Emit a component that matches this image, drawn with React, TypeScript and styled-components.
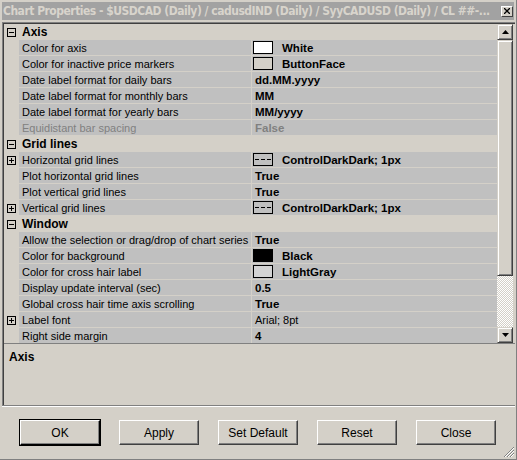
import React from 'react';
import styled, { createGlobalStyle, css } from 'styled-components';

type Row =
  | { kind: 'cat'; label: string }
  | {
      kind: 'prop';
      label: string;
      value: string;
      swatch?: string;
      line?: boolean;
      plain?: boolean;
      disabled?: boolean;
      expandable?: boolean;
    };

const rows: Row[] = [
  { kind: 'cat', label: 'Axis' },
  { kind: 'prop', label: 'Color for axis', value: 'White', swatch: '#ffffff' },
  { kind: 'prop', label: 'Color for inactive price markers', value: 'ButtonFace', swatch: '#d4d0c8' },
  { kind: 'prop', label: 'Date label format for daily bars', value: 'dd.MM.yyyy' },
  { kind: 'prop', label: 'Date label format for monthly bars', value: 'MM' },
  { kind: 'prop', label: 'Date label format for yearly bars', value: 'MM/yyyy' },
  { kind: 'prop', label: 'Equidistant bar spacing', value: 'False', disabled: true },
  { kind: 'cat', label: 'Grid lines' },
  { kind: 'prop', label: 'Horizontal grid lines', value: 'ControlDarkDark; 1px', line: true, expandable: true },
  { kind: 'prop', label: 'Plot horizontal grid lines', value: 'True' },
  { kind: 'prop', label: 'Plot vertical grid lines', value: 'True' },
  { kind: 'prop', label: 'Vertical grid lines', value: 'ControlDarkDark; 1px', line: true, expandable: true },
  { kind: 'cat', label: 'Window' },
  { kind: 'prop', label: 'Allow the selection or drag/drop of chart series', value: 'True' },
  { kind: 'prop', label: 'Color for background', value: 'Black', swatch: '#000000' },
  { kind: 'prop', label: 'Color for cross hair label', value: 'LightGray', swatch: '#d3d3d3' },
  { kind: 'prop', label: 'Display update interval (sec)', value: '0.5' },
  { kind: 'prop', label: 'Global cross hair time axis scrolling', value: 'True' },
  { kind: 'prop', label: 'Label font', value: 'Arial; 8pt', plain: true, expandable: true },
  { kind: 'prop', label: 'Right side margin', value: '4' },
];

const buttons = ['OK', 'Apply', 'Set Default', 'Reset', 'Close'];

const GlobalStyle = createGlobalStyle`
  body {
    margin: 0;
    font-family: "Liberation Sans", Arial, sans-serif;
    font-size: 11px;
  }
`;

const Window = styled.div`
  position: relative;
  box-sizing: border-box;
  width: 517px;
  height: 460px;
  background: #d4d0c8;
  padding: 2px 2px 0 2px;
  border-right: 1px solid #808080;
  border-bottom: 1px solid #808080;
  display: flex;
  flex-direction: column;
  overflow: hidden;
`;

const TitleBar = styled.div`
  height: 18px;
  background: #a2a2a2;
  display: flex;
  align-items: center;
  padding-left: 1px;
`;

const Title = styled.div`
  flex: 1;
  min-width: 0;
  color: #d8d4cc;
  font-family: "DejaVu Sans Condensed", "DejaVu Sans", sans-serif;
  font-stretch: condensed;
  font-weight: bold;
  font-size: 12px;
  letter-spacing: -0.5px;
  white-space: nowrap;
  overflow: hidden;
`;

const CloseButton = styled.div`
  width: 10px;
  height: 9px;
  flex: none;
  margin: 0 1px 0 4px;
  background: #d4d0c8;
  border-top: 1px solid #fff;
  border-left: 1px solid #fff;
  border-right: 1px solid #404040;
  border-bottom: 1px solid #404040;
  display: flex;
  align-items: center;
  justify-content: center;
`;

const Frame = styled.div`
  margin-top: 2px;
  width: 511px;
  border-top: 1px solid #808080;
  border-left: 1px solid #808080;
  border-bottom: 1px solid #808080;
  box-shadow: inset 1px 1px 0 #404040, 0 1px 0 #ffffff;
  padding: 1px 0 0 1px;
  display: flex;
  flex-direction: column;
`;

const GridArea = styled.div`
  height: 319px;
  display: flex;
  border-bottom: 1px solid #808080;
  overflow: hidden;
`;

const Grid = styled.div`
  width: 493px;
  display: flex;
  flex-direction: column;
`;

const RowBox = styled.div`
  flex: none;
  height: 16px;
  display: flex;
`;

const Gutter = styled.div`
  width: 15px;
  flex: none;
  background: #d4d0c8;
  display: flex;
  align-items: center;
  padding-left: 3px;
  box-sizing: border-box;
`;

const Cell = styled.div<{ $grow?: boolean }>`
  box-sizing: border-box;
  background: #c0c0c0;
  border-bottom: 1px solid #d4d0c8;
  display: flex;
  align-items: center;
  white-space: nowrap;
  overflow: hidden;
  ${({ $grow }) =>
    $grow
      ? css`
          flex: 1;
          border-left: 1px solid #d4d0c8;
        `
      : css`
          width: 232px;
          flex: none;
          padding-left: 3px;
        `}
`;

const NameText = styled.span<{ $disabled?: boolean }>`
  color: ${({ $disabled }) => ($disabled ? '#808080' : '#000')};
`;

const ValueText = styled.span<{ $bold: boolean; $disabled?: boolean; $indent: number }>`
  padding-left: ${({ $indent }) => $indent}px;
  font-weight: ${({ $bold }) => ($bold ? 'bold' : 'normal')};
  font-size: ${({ $bold }) => ($bold ? '11.5px' : '11px')};
  color: ${({ $disabled }) => ($disabled ? '#808080' : '#000')};
`;

const Category = styled.div`
  flex: 1;
  background: #d4d0c8;
  display: flex;
  align-items: center;
  padding-left: 3px;
  font-weight: bold;
  font-size: 12px;
`;

const Swatch = styled.div<{ $color: string }>`
  width: 20px;
  height: 13px;
  box-sizing: border-box;
  margin-left: 1px;
  border: 1px solid #000;
  background: ${({ $color }) => $color};
  flex: none;
`;

const ScrollBar = styled.div`
  width: 16px;
  flex: none;
  display: flex;
  flex-direction: column;
  background-color: #d4d0c8;
  background-image: conic-gradient(#ffffff 25%, #d4d0c8 0 50%, #ffffff 0 75%, #d4d0c8 0);
  background-size: 2px 2px;
`;

const raised = css`
  box-sizing: border-box;
  background: #d4d0c8;
  border-top: 1px solid #d4d0c8;
  border-left: 1px solid #d4d0c8;
  border-right: 1px solid #404040;
  border-bottom: 1px solid #404040;
  box-shadow: inset 1px 1px 0 #ffffff, inset -1px -1px 0 #808080;
`;

const ArrowButton = styled.div`
  ${raised};
  height: 16px;
  flex: none;
  display: flex;
  align-items: center;
  justify-content: center;
`;

const Thumb = styled.div`
  ${raised};
  height: 236px;
  flex: none;
`;

const Track = styled.div`
  flex: 1;
`;

const Description = styled.div`
  height: 61px;
  border-top: 1px solid #d4d0c8;
  padding: 5px 5px;
  box-sizing: border-box;
  font-weight: bold;
  font-size: 12px;
`;

const ButtonRow = styled.div`
  display: flex;
  gap: 19px;
  padding: 14px 0 0 18px;
`;

const Button = styled.div<{ $default?: boolean }>`
  width: 80px;
  height: 25px;
  box-sizing: border-box;
  display: flex;
  align-items: center;
  justify-content: center;
  font-size: 12px;
  background: #d4d0c8;
  border-top: 1px solid #ffffff;
  border-left: 1px solid #ffffff;
  border-right: 1px solid #404040;
  border-bottom: 1px solid #404040;
  box-shadow: inset -1px -1px 0 #808080;
  ${({ $default }) =>
    $default &&
    css`
      outline: 1px solid #000;
      outline-offset: 0;
      border-right-color: #000;
      border-bottom-color: #000;
    `}
`;

const Grip = styled.svg`
  position: absolute;
  right: 1px;
  bottom: 1px;
`;

const Expander = ({ open }: { open: boolean }) => (
  <svg width="9" height="9" viewBox="0 0 9 9">
    <rect x="0.5" y="0.5" width="8" height="8" fill="#d4d0c8" stroke="#000" />
    <line x1="2" y1="4.5" x2="7" y2="4.5" stroke="#000" />
    {!open && <line x1="4.5" y1="2" x2="4.5" y2="7" stroke="#000" />}
  </svg>
);

const LineIcon = () => (
  <svg width="20" height="13" viewBox="0 0 20 13" style={{ marginLeft: 1, flex: 'none' }}>
    <rect x="0.5" y="0.5" width="19" height="12" fill="none" stroke="#000" />
    <line x1="2" y1="6.5" x2="18" y2="6.5" stroke="#000" strokeDasharray="4 2" />
  </svg>
);

const Arrow = ({ up }: { up: boolean }) => (
  <svg width="7" height="4" viewBox="0 0 7 4">
    <polygon points={up ? '3.5,0 7,4 0,4' : '0,0 7,0 3.5,4'} fill="#000" />
  </svg>
);

const PropertyRow = ({ row }: { row: Row }) => {
  if (row.kind === 'cat') {
    return (
      <RowBox>
        <Gutter>
          <Expander open />
        </Gutter>
        <Category>{row.label}</Category>
      </RowBox>
    );
  }
  const hasIcon = !!row.swatch || !!row.line;
  return (
    <RowBox>
      <Gutter>{row.expandable && <Expander open={false} />}</Gutter>
      <Cell>
        <NameText $disabled={row.disabled}>{row.label}</NameText>
      </Cell>
      <Cell $grow>
        {row.swatch && <Swatch $color={row.swatch} />}
        {row.line && <LineIcon />}
        <ValueText $bold={!row.plain} $disabled={row.disabled} $indent={hasIcon ? 9 : 3}>
          {row.value}
        </ValueText>
      </Cell>
    </RowBox>
  );
};

const App: React.FC = () => (
  <>
    <GlobalStyle />
    <Window>
      <TitleBar>
        <Title>Chart Properties - $USDCAD (Daily) / cadusdIND (Daily) / SyyCADUSD (Daily) / CL ##-...</Title>
        <CloseButton>
          <svg width="6" height="6" viewBox="0 0 6 6">
            <path d="M0 0L6 6M6 0L0 6" stroke="#000" strokeWidth="1.3" />
          </svg>
        </CloseButton>
      </TitleBar>

      <Frame>
        <GridArea>
          <Grid>
            {rows.map((row) => (
              <PropertyRow key={row.label} row={row} />
            ))}
          </Grid>
          <ScrollBar>
            <ArrowButton>
              <Arrow up />
            </ArrowButton>
            <Thumb />
            <Track />
            <ArrowButton>
              <Arrow up={false} />
            </ArrowButton>
          </ScrollBar>
        </GridArea>
        <Description>Axis</Description>
      </Frame>

      <ButtonRow>
        {buttons.map((label) => (
          <Button key={label} $default={label === 'OK'}>
            {label}
          </Button>
        ))}
      </ButtonRow>

      <Grip width="12" height="12" viewBox="0 0 12 12">
        <path d="M11 1L1 11M11 4L4 11M11 7L7 11" stroke="#808080" strokeWidth="1" />
        <path d="M11 2L2 11M11 5L5 11M11 8L8 11" stroke="#ffffff" strokeWidth="1" />
      </Grip>
    </Window>
  </>
);

export default App;
